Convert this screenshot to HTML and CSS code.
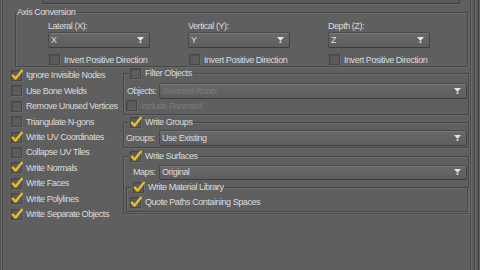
FILE: index.html
```html
<!DOCTYPE html>
<html>
<head>
<meta charset="utf-8">
<link rel="stylesheet" href="styles.css">
</head>
<body>
<div class="window">
  <div class="lframe"></div>
  <div class="main">
    <div class="scale-row">
      <span class="scale-label">Scale:</span>
      <div class="scale-field">100</div>
      <span class="pct">%</span>
    </div>

    <fieldset class="group axis">
      <legend class="gtitle">Axis Conversion</legend>
      <div class="axis-cols">
        <div class="axis-col">
          <div class="lbl">Lateral (X):</div>
          <div class="combo"><span class="val">X</span><svg class="arrow" width="7" height="6" viewBox="0 0 7 6"><polygon points="0,0 7,0 3.5,4"/><rect x="2.5" y="4.3" width="2" height="1.5"/></svg></div>
          <label class="chk inv"><span class="box"></span>Invert Positive Direction</label>
        </div>
        <div class="axis-col">
          <div class="lbl">Vertical (Y):</div>
          <div class="combo"><span class="val">Y</span><svg class="arrow" width="7" height="6" viewBox="0 0 7 6"><polygon points="0,0 7,0 3.5,4"/><rect x="2.5" y="4.3" width="2" height="1.5"/></svg></div>
          <label class="chk inv"><span class="box"></span>Invert Positive Direction</label>
        </div>
        <div class="axis-col">
          <div class="lbl">Depth (Z):</div>
          <div class="combo"><span class="val">Z</span><svg class="arrow" width="7" height="6" viewBox="0 0 7 6"><polygon points="0,0 7,0 3.5,4"/><rect x="2.5" y="4.3" width="2" height="1.5"/></svg></div>
          <label class="chk inv"><span class="box"></span>Invert Positive Direction</label>
        </div>
      </div>
    </fieldset>

    <div class="lower">
      <div class="opts">
        <label class="chk row"><span class="box on"><svg viewBox="0 0 12 12" width="12" height="12"><polyline points="1.8,5.6 4.6,8.6 10.8,0.8"/></svg></span>Ignore Invisible Nodes</label>
        <label class="chk row"><span class="box"></span>Use Bone Welds</label>
        <label class="chk row"><span class="box"></span>Remove Unused Vertices</label>
        <label class="chk row"><span class="box"></span>Triangulate N-gons</label>
        <label class="chk row"><span class="box on"><svg viewBox="0 0 12 12" width="12" height="12"><polyline points="1.8,5.6 4.6,8.6 10.8,0.8"/></svg></span>Write UV Coordinates</label>
        <label class="chk row"><span class="box"></span>Collapse UV Tiles</label>
        <label class="chk row"><span class="box on"><svg viewBox="0 0 12 12" width="12" height="12"><polyline points="1.8,5.6 4.6,8.6 10.8,0.8"/></svg></span>Write Normals</label>
        <label class="chk row"><span class="box on"><svg viewBox="0 0 12 12" width="12" height="12"><polyline points="1.8,5.6 4.6,8.6 10.8,0.8"/></svg></span>Write Faces</label>
        <label class="chk row"><span class="box on"><svg viewBox="0 0 12 12" width="12" height="12"><polyline points="1.8,5.6 4.6,8.6 10.8,0.8"/></svg></span>Write Polylines</label>
        <label class="chk row"><span class="box on"><svg viewBox="0 0 12 12" width="12" height="12"><polyline points="1.8,5.6 4.6,8.6 10.8,0.8"/></svg></span>Write Separate Objects</label>
      </div>

      <div class="groups">
        <fieldset class="group filter">
          <legend class="gtitle chk"><span class="box"></span>Filter Objects</legend>
          <div class="frow">
            <span class="flbl">Objects:</span>
            <div class="combo disabled"><span class="val">Selected Roots</span><svg class="arrow" width="7" height="6" viewBox="0 0 7 6"><polygon points="0,0 7,0 3.5,4"/><rect x="2.5" y="4.3" width="2" height="1.5"/></svg></div>
          </div>
          <label class="chk incl disabled"><span class="box"></span>Include Parented</label>
        </fieldset>

        <fieldset class="group wgroups">
          <legend class="gtitle chk"><span class="box on"><svg viewBox="0 0 12 12" width="12" height="12"><polyline points="1.8,5.6 4.6,8.6 10.8,0.8"/></svg></span>Write Groups</legend>
          <div class="frow">
            <span class="flbl">Groups:</span>
            <div class="combo"><span class="val">Use Existing</span><svg class="arrow" width="7" height="6" viewBox="0 0 7 6"><polygon points="0,0 7,0 3.5,4"/><rect x="2.5" y="4.3" width="2" height="1.5"/></svg></div>
          </div>
        </fieldset>

        <fieldset class="group surfaces">
          <legend class="gtitle chk"><span class="box on"><svg viewBox="0 0 12 12" width="12" height="12"><polyline points="1.8,5.6 4.6,8.6 10.8,0.8"/></svg></span>Write Surfaces</legend>
          <div class="frow maps">
            <span class="flbl">Maps:</span>
            <div class="combo"><span class="val">Original</span><svg class="arrow" width="7" height="6" viewBox="0 0 7 6"><polygon points="0,0 7,0 3.5,4"/><rect x="2.5" y="4.3" width="2" height="1.5"/></svg></div>
          </div>
          <fieldset class="group matlib">
            <legend class="gtitle chk"><span class="box on"><svg viewBox="0 0 12 12" width="12" height="12"><polyline points="1.8,5.6 4.6,8.6 10.8,0.8"/></svg></span>Write Material Library</legend>
            <label class="chk quote"><span class="box on"><svg viewBox="0 0 12 12" width="12" height="12"><polyline points="1.8,5.6 4.6,8.6 10.8,0.8"/></svg></span>Quote Paths Containing Spaces</label>
          </fieldset>
        </fieldset>
      </div>
    </div>
  </div>
  <div class="rframe"></div>
</div>
</body>
</html>
```

FILE: styles.css
```css
* { box-sizing: border-box; }
html, body { margin: 0; padding: 0; }
body {
  width: 480px;
  height: 270px;
  overflow: hidden;
  background: #5f5f5f;
  font-family: "Liberation Sans", Arial, sans-serif;
  font-size: 9px;
  letter-spacing: -0.45px;
  color: #dcdcdc;
}
.window { display: flex; height: 270px; }
.lframe {
  width: 4px;
  background: linear-gradient(to right, #545454 0 1px, #6a6a6a 1px 2px, #4a4a4a 2px 3px, #636363 3px 4px);
}
.rframe {
  width: 10px;
  background: linear-gradient(to right, #4a4a4a 0 1px, #6b6b6b 1px 2px, #5c5c5c 2px 4px, #474747 4px 5px, #6a6a6a 5px 6px, #5a5a5a 6px 8px, #454545 8px 9px, #636363 9px 10px);
}
.main { flex: 1; min-width: 0; overflow: hidden; }

/* scale row (cut off at top) */
.scale-row {
  display: flex;
  align-items: center;
  height: 15px;
  margin-top: -11px;
}
.scale-label { width: 38px; }
.scale-field {
  flex: 1;
  height: 15px;
  line-height: 13px;
  text-align: right;
  padding-right: 2px;
  border: 1px solid #464646;
  border-bottom-color: #3e3e3e;
  background: #5a5a5a;
  box-shadow: 0 1px 0 #6b6b6b;
}
.pct { width: 10px; text-align: right; padding-right: 1px; }

/* group boxes */
.group {
  margin: 0;
  padding: 0;
  min-width: 0;
  border: 1px solid #474747;
  box-shadow: inset 1px 1px 0 #6b6b6b, 1px 1px 0 #6b6b6b;
}
.gtitle {
  background: #5f5f5f;
  padding: 0 1px;
  margin-left: 0;
  line-height: 11px;
}
.axis { margin: 3px 2px 0 11px; }
.axis-cols {
  display: grid;
  grid-template-columns: repeat(3, 102px);
  column-gap: 38px;
  padding: 1px 0 0 32px;
}
.lbl { height: 11px; line-height: 11px; margin-top: 1.5px; }
.axis .combo { margin-top: 0; height: 16px; }
.chk.inv { margin-top: 6px; padding-left: 1px; }

/* combo box */
.combo {
  display: flex;
  align-items: center;
  justify-content: space-between;
  height: 16px;
  padding: 0 5px 0 2px;
  border: 1px solid #4a4a4a;
  border-bottom-color: #3c3c3c;
  border-right-color: #424242;
  border-radius: 2px;
  background: linear-gradient(#696969, #5d5d5d);
  box-shadow: inset 0 1px 0 #777777;
  color: #dcdcdc;
}
.combo .arrow { fill: #e4e4e4; flex: none; }
.combo.disabled .val { font-style: italic; color: #7c7c7c; }

/* checkboxes */
.chk {
  display: flex;
  align-items: center;
  gap: 4px;
  height: 12px;
  white-space: nowrap;
}
.box {
  position: relative;
  flex: none;
  width: 11px;
  height: 11px;
  border: 1px solid #474747;
  background: #5c5c5c;
  box-shadow: inset 1px 1px 0 #525252, 1px 1px 0 #6a6a6a;
}
.box svg {
  position: absolute;
  left: -1px;
  top: -1px;
  overflow: visible;
}
.box svg polyline {
  fill: none;
  stroke: #eabb28;
  stroke-width: 2.4;
  stroke-linecap: round;
  stroke-linejoin: round;
}
.chk.disabled { color: #7c7c7c; font-style: italic; }

/* lower area */
.lower {
  display: grid;
  grid-template-columns: 119px 1fr;
}
.opts { padding: 1.3px 0 0 7px; }
.chk.row { height: 15.4px; }

.groups { padding-right: 1px; }
.gtitle.chk {
  height: 12px;
  margin-left: 5px;
}
.frow {
  display: grid;
  grid-template-columns: 32px 1fr;
  align-items: center;
  padding: 0 1px 0 3px;
}
.filter { margin-top: 1px; }
.filter .frow { margin-top: 3px; }
.chk.incl { margin-top: 1px; padding-left: 2px; margin-bottom: 2px; }

.wgroups { margin-top: 2px; }
.wgroups .frow { margin-top: 1px; margin-bottom: 1px; padding-left: 2px; grid-template-columns: 33px 1fr; }

.surfaces { margin-top: 3px; padding-bottom: 1px; }
.frow.maps { margin-top: 2px; padding-left: 9px; grid-template-columns: 26px 1fr; }
.frow.maps .combo { height: 15px; }
.matlib { margin: 1.5px 0 0 2px; }
.chk.quote { margin: 3px 0 3px 3px; }
```
